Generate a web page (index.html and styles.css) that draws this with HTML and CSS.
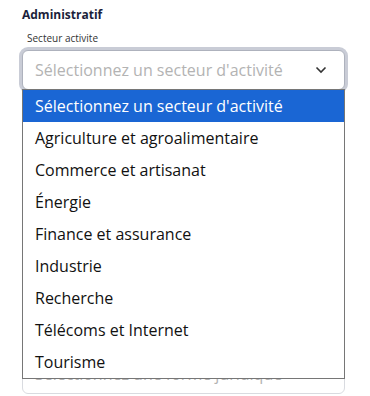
FILE: index.html
```html
<!DOCTYPE html>
<html lang="fr">
<head>
    <meta charset="UTF-8">
    <title>Administratif</title>
    <link rel="stylesheet" href="styles.css">
</head>
<body>
    <div class="form">
        <h2 class="section-title">Administratif</h2>

        <div class="field field-first">
            <label class="field-label">Secteur activite</label>
            <div class="select select-open">
                <span class="placeholder">Sélectionnez un secteur d'activité</span>
                <svg class="chevron" width="12" height="8" viewBox="0 0 12 8"><path d="M1.5 1.5 L6 6 L10.5 1.5" fill="none" stroke="#333" stroke-width="1.6"/></svg>
            </div>
        </div>

        <!-- next field, mostly under the open list -->
        <div class="field field-under">
            <div class="select">
                <span class="placeholder">Sélectionnez une forme juridique</span>
                <svg class="chevron" width="12" height="8" viewBox="0 0 12 8"><path d="M1.5 1.5 L6 6 L10.5 1.5" fill="none" stroke="#333" stroke-width="1.6"/></svg>
            </div>
        </div>
    </div>

    <!-- open dropdown of "Secteur activite" -->
    <ul class="dropdown">
        <li class="option selected">Sélectionnez un secteur d'activité</li>
        <li class="option">Agriculture et agroalimentaire</li>
        <li class="option">Commerce et artisanat</li>
        <li class="option">Énergie</li>
        <li class="option">Finance et assurance</li>
        <li class="option">Industrie</li>
        <li class="option">Recherche</li>
        <li class="option">Télécoms et Internet</li>
        <li class="option">Tourisme</li>
    </ul>
</body>
</html>
```

FILE: styles.css
```css
/* General */
body {
    margin: 0;
    background: #fff;
    font-family: "Open Sans", "Noto Sans", sans-serif;
    color: #222;
}
.form {
    width: 323px;
    padding: 6px 0 0 22px;
}
.section-title {
    margin: 0;
    font-size: 12px;
    line-height: 18px;
    font-weight: 700;
    color: #1b1f3b;
}

/* Fields */
.field-first {
    margin-top: 6px;
}
.field-under {
    margin-top: 264px;
}
.field-label {
    display: block;
    margin: 0 0 4px 5px;
    font-size: 10px;
    line-height: 16px;
    color: #333;
}
.select {
    box-sizing: border-box;
    height: 40px;
    display: flex;
    align-items: center;
    justify-content: space-between;
    padding: 0 17px 0 12px;
    border: 1px solid #d9dbe0;
    border-radius: 6px;
    background: #fff;
}
.select-open {
    border-color: #aeb2bd;
    box-shadow: 0 0 0 3px #c9ccd6;
}
.placeholder {
    font-size: 16px;
    color: #b3b3b3;
    white-space: nowrap;
}

/* Dropdown list */
.dropdown {
    position: absolute;
    top: 89px;
    left: 22px;
    box-sizing: border-box;
    width: 323px;
    margin: 0;
    padding: 0;
    list-style: none;
    background: #fff;
    border: 1px solid #767676;
}
.option {
    height: 32px;
    line-height: 32px;
    padding-left: 12px;
    font-size: 16px;
    color: #111;
}
.option.selected {
    background: #1a66d4;
    color: #fff;
}
```
